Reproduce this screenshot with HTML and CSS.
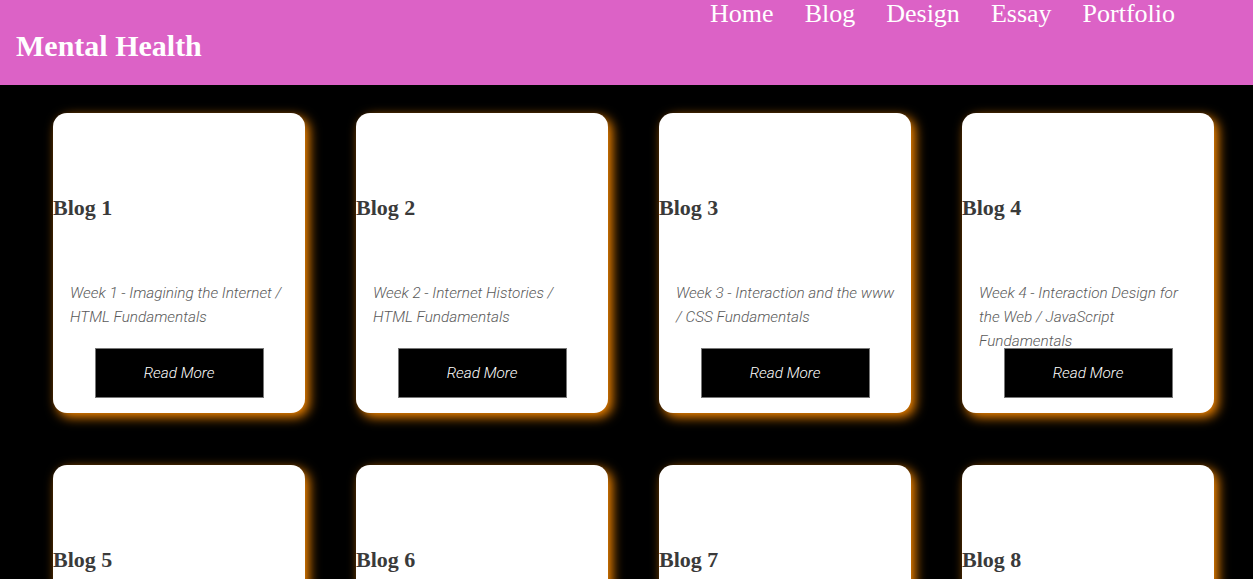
FILE: index.html
```html
<!DOCTYPE html>
<html lang="en">
<head>
<meta charset="utf-8">
<title>Mental Health - Blog</title>
<link rel="stylesheet" href="styles.css">
</head>
<body>
<header class="site-header">
  <h1 class="site-title">Mental Health</h1>
  <nav class="site-nav">
    <a href="#">Home</a>
    <a href="#">Blog</a>
    <a href="#">Design</a>
    <a href="#">Essay</a>
    <a href="#">Portfolio</a>
  </nav>
</header>
<main class="grid">
  <article class="card">
    <h2 class="card-title">Blog 1</h2>
    <p class="card-text">Week 1 - Imagining the Internet / HTML Fundamentals</p>
    <a class="btn" href="#">Read More</a>
  </article>
  <article class="card">
    <h2 class="card-title">Blog 2</h2>
    <p class="card-text">Week 2 - Internet Histories / HTML Fundamentals</p>
    <a class="btn" href="#">Read More</a>
  </article>
  <article class="card">
    <h2 class="card-title">Blog 3</h2>
    <p class="card-text">Week 3 - Interaction and the www / CSS Fundamentals</p>
    <a class="btn" href="#">Read More</a>
  </article>
  <article class="card">
    <h2 class="card-title">Blog 4</h2>
    <p class="card-text">Week 4 - Interaction Design for the Web / JavaScript Fundamentals</p>
    <a class="btn" href="#">Read More</a>
  </article>
  <article class="card">
    <h2 class="card-title">Blog 5</h2>
    <p class="card-text">Week 5</p>
    <a class="btn" href="#">Read More</a>
  </article>
  <article class="card">
    <h2 class="card-title">Blog 6</h2>
    <p class="card-text">Week 6</p>
    <a class="btn" href="#">Read More</a>
  </article>
  <article class="card">
    <h2 class="card-title">Blog 7</h2>
    <p class="card-text">Week 7</p>
    <a class="btn" href="#">Read More</a>
  </article>
  <article class="card">
    <h2 class="card-title">Blog 8</h2>
    <p class="card-text">Week 8</p>
    <a class="btn" href="#">Read More</a>
  </article>
</main>
</body>
</html>
```
FILE: styles.css
```css
html, body {
  margin: 0;
  padding: 0;
  background: #000;
}

.site-header {
  display: flex;
  justify-content: space-between;
  align-items: flex-start;
  height: 85px;
  padding: 0 78px 0 16px;
  background: #dc62c6;
  box-sizing: border-box;
}

.site-title {
  margin: 29px 0 0 0;
  font-family: "Liberation Serif", "Times New Roman", serif;
  font-weight: bold;
  font-size: 30px;
  line-height: normal;
  color: #fff;
}

.site-nav {
  display: flex;
  gap: 31px;
  margin-top: -1px;
}

.site-nav a {
  font-family: "Liberation Serif", "Times New Roman", serif;
  font-size: 26px;
  line-height: normal;
  color: #fff;
  text-decoration: none;
}

.grid {
  display: grid;
  grid-template-columns: repeat(4, 252px);
  column-gap: 51px;
  row-gap: 52px;
  padding: 28px 39px 40px 53px;
}

.card {
  height: 300px;
  background: #fff;
  border-radius: 14px;
  box-shadow: 4px 4px 12px #ff8c00;
  display: flex;
  flex-direction: column;
  align-items: flex-start;
}

.card-title {
  margin: 81px 0 0 0;
  font-family: "Liberation Serif", "Times New Roman", serif;
  font-weight: bold;
  font-size: 22px;
  line-height: 28px;
  color: #3a3a3a;
}

.card-text {
  margin: 59px 0 0 17px;
  width: 222px;
  height: 48px;
  font-family: Roboto, "Liberation Sans", sans-serif;
  font-style: italic;
  font-weight: 300;
  font-size: 15.3px;
  line-height: 24px;
  color: #5a5a5a;
}

.btn {
  align-self: center;
  margin-top: 19px;
  width: 169px;
  height: 50px;
  box-sizing: border-box;
  border: 1px solid #777;
  background: #000;
  color: #fff;
  display: flex;
  align-items: center;
  justify-content: center;
  font-family: Roboto, "Liberation Sans", sans-serif;
  font-style: italic;
  font-weight: 300;
  font-size: 15.3px;
  text-decoration: none;
}
```
